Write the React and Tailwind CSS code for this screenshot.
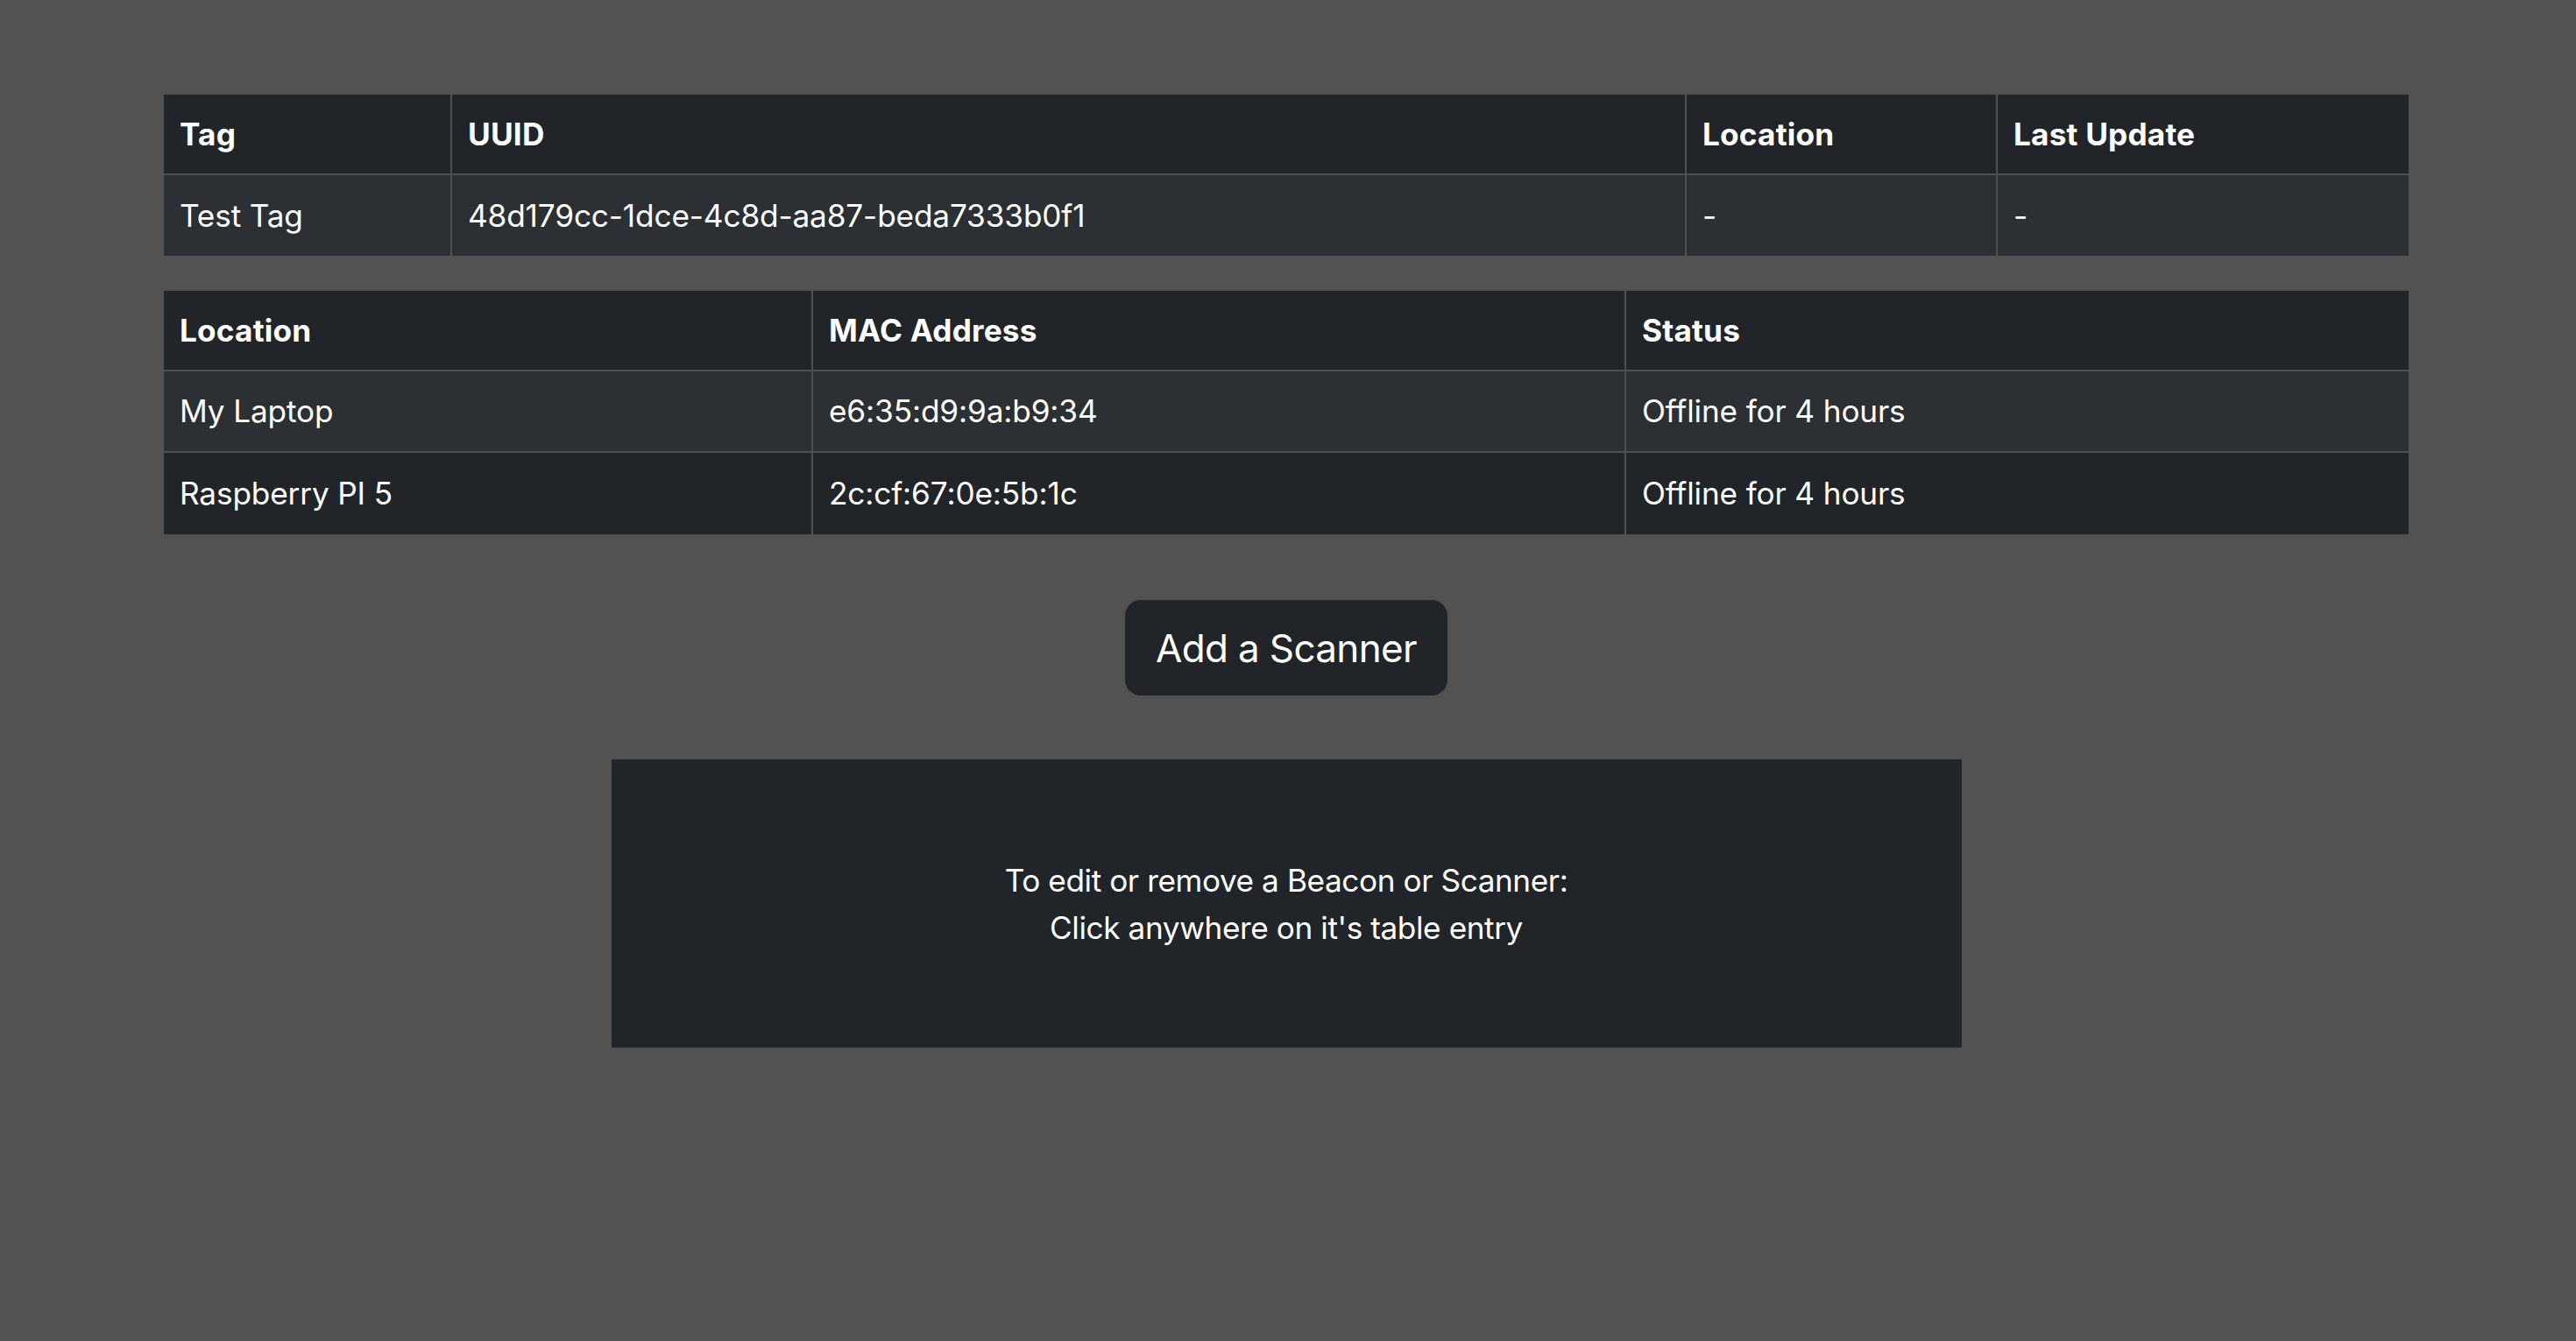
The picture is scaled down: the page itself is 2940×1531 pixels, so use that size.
import React from 'react';

const beacons = [
	{ tag: 'Test Tag', uuid: '48d179cc-1dce-4c8d-aa87-beda7333b0f1', location: '-', lastUpdate: '-' },
];

const scanners = [
	{ location: 'My Laptop', mac: 'e6:35:d9:9a:b9:34', status: 'Offline for 4 hours' },
	{ location: 'Raspberry PI 5', mac: '2c:cf:67:0e:5b:1c', status: 'Offline for 4 hours' },
];

const Cell = ({ children, head, last }) => (
	<div
		className={`flex items-center px-[18px] text-[35.2px] leading-[52.8px] text-white ${
			head ? 'font-bold tracking-[0.005em]' : 'font-normal tracking-[-0.004em]'
		} ${last ? '' : 'border-r-2 border-[#4d5154]'}`}
	>
		{children}
	</div>
);

const BeaconTable = () => (
	<div className="w-full">
		<div className="grid h-[92px] grid-cols-[329px_1409px_355px_1fr] border-b-2 border-[#4d5154] bg-[#212529]">
			<Cell head>Tag</Cell>
			<Cell head>UUID</Cell>
			<Cell head>Location</Cell>
			<Cell head last>Last Update</Cell>
		</div>
		{beacons.map((b, i) => (
			<div
				key={b.uuid}
				className={`grid h-[92px] grid-cols-[329px_1409px_355px_1fr] ${
					i % 2 === 0 ? 'bg-[#2c3034]' : 'bg-[#212529]'
				}`}
			>
				<Cell>{b.tag}</Cell>
				<Cell>{b.uuid}</Cell>
				<Cell>{b.location}</Cell>
				<Cell last>{b.lastUpdate}</Cell>
			</div>
		))}
	</div>
);

const ScannerTable = () => (
	<div className="w-full">
		<div className="grid h-[92px] grid-cols-[741px_928px_1fr] border-b-2 border-[#4d5154] bg-[#212529]">
			<Cell head>Location</Cell>
			<Cell head>MAC Address</Cell>
			<Cell head last>Status</Cell>
		</div>
		{scanners.map((s, i) => (
			<div
				key={s.mac}
				className={`grid h-[93px] grid-cols-[741px_928px_1fr] ${
					i % 2 === 0 ? 'bg-[#2c3034] border-b-2 border-[#4d5154]' : 'bg-[#212529]'
				}`}
			>
				<Cell>{s.location}</Cell>
				<Cell>{s.mac}</Cell>
				<Cell last>{s.status}</Cell>
			</div>
		))}
	</div>
);

export default function App() {
	return (
		<div
			className="min-h-screen bg-[#525252] pb-[200px]"
			style={{ fontFamily: 'Inter, "Noto Sans", sans-serif' }}
		>
			<div className="mx-[187px] w-[2562px] pt-[108px]">
				<BeaconTable />
				<div className="mt-[40px]">
					<ScannerTable />
				</div>
				<div className="mt-[75px] flex justify-center">
					<button className="h-[109px] w-[368px] rounded-[18px] bg-[#212529] text-[44px] leading-[66px] tracking-[-0.015em] text-white">
						Add a Scanner
					</button>
				</div>
				<div className="mt-[73px] flex justify-center">
					<div className="flex h-[329px] w-[1541px] flex-col items-center justify-center bg-[#212529] text-center text-[35.2px] leading-[54px] tracking-[-0.012em] text-white">
						<p>To edit or remove a Beacon or Scanner:</p>
						<p>Click anywhere on it's table entry</p>
					</div>
				</div>
			</div>
		</div>
	);
}
